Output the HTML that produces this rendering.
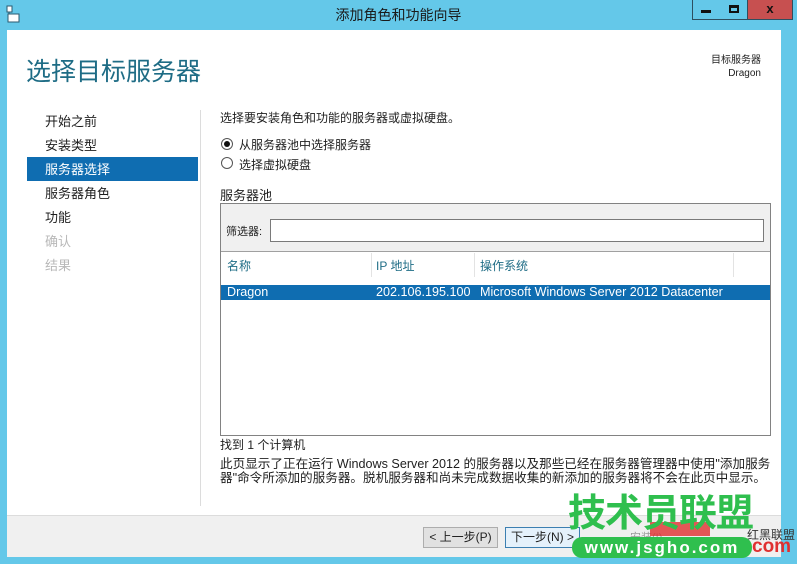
<!DOCTYPE html>
<html><head><meta charset="utf-8"><style>
*{margin:0;padding:0;box-sizing:border-box}
body{width:797px;height:564px;overflow:hidden;background:#64c8e9;font-family:"Liberation Sans","Noto Sans CJK SC",sans-serif;font-size:12px;color:#1e1e1e;position:relative}
.a{position:absolute;white-space:nowrap}
</style></head><body>
<div class="a" style="left:0;top:0;width:797px;height:29px;background:#64c8e9"></div>
<svg class="a" style="left:6px;top:5px" width="14" height="18" viewBox="0 0 14 18"><rect x="1" y="1" width="5" height="6" fill="#fff" stroke="#2a5a70"/><rect x="2" y="9" width="11" height="8" fill="#fff" stroke="#2a5a70"/><line x1="3" y1="7" x2="3" y2="9" stroke="#2a5a70"/></svg>
<div class="a" style="left:0;width:797px;top:5px;text-align:center;font-size:14px;color:#1a1a1a">添加角色和功能向导</div>
<div class="a" style="left:692px;top:0;width:29px;height:20px;border:1px solid #2d4f60;border-top:none;background:#64c8e9"></div>
<div class="a" style="left:701px;top:10px;width:10px;height:3px;background:#111"></div>
<div class="a" style="left:720px;top:0;width:28px;height:20px;border:1px solid #2d4f60;border-top:none;border-left:none;background:#64c8e9"></div>
<div class="a" style="left:729px;top:5px;width:10px;height:8px;border:2px solid #111;border-top-width:3px"></div>
<div class="a" style="left:748px;top:0;width:45px;height:20px;background:#c75050;border:1px solid #2d4f60;border-top:none;border-left:none;text-align:center;font-weight:bold;font-size:13px;color:#111;line-height:18px">x</div>
<div class="a" style="left:7px;top:30px;width:774px;height:486px;background:#fff"></div>
<div class="a" style="left:7px;top:515px;width:774px;height:42px;background:#f0f0f0;border-top:1px solid #dcdcdc"></div>
<div class="a" style="left:26px;top:52px;font-size:25px;color:#1e6c85">选择目标服务器</div>
<div class="a" style="right:36px;top:54px;font-size:10px;text-align:right;line-height:13px">目标服务器<br>Dragon</div>
<div class="a" style="left:27px;top:157px;width:171px;height:24px;background:#0f6db1"></div>
<div class="a" style="left:45px;top:110px;font-size:13px;line-height:24px">开始之前<br>安装类型<br><span style="color:#fff">服务器选择</span><br>服务器角色<br>功能<br><span style="color:#b8b8b8">确认</span><br><span style="color:#b8b8b8">结果</span></div>
<div class="a" style="left:200px;top:110px;width:1px;height:396px;background:#dcdcdc"></div>
<div class="a" style="left:220px;top:109px">选择要安装角色和功能的服务器或虚拟硬盘。</div>
<div class="a" style="left:221px;top:138px;width:12px;height:12px;border:1px solid #555;border-radius:50%"><div style="margin:2px;width:6px;height:6px;border-radius:50%;background:#111"></div></div>
<div class="a" style="left:239px;top:136px">从服务器池中选择服务器</div>
<div class="a" style="left:221px;top:157px;width:12px;height:12px;border:1px solid #555;border-radius:50%"></div>
<div class="a" style="left:239px;top:156px">选择虚拟硬盘</div>
<div class="a" style="left:220px;top:185px;font-size:13px">服务器池</div>
<div class="a" style="left:220px;top:203px;width:551px;height:233px;border:1px solid #828282;background:#fff"></div>
<div class="a" style="left:221px;top:204px;width:549px;height:48px;background:#f0f0f0;border-bottom:1px solid #a0a0a0"></div>
<div class="a" style="left:226px;top:223px;font-size:11px">筛选器:</div>
<div class="a" style="left:270px;top:219px;width:494px;height:23px;border:1px solid #7a7a7a;background:#fff"></div>
<div class="a" style="left:227px;top:257px;color:#1e6c85">名称</div>
<div class="a" style="left:376px;top:257px;color:#1e6c85">IP 地址</div>
<div class="a" style="left:480px;top:257px;color:#1e6c85">操作系统</div>
<div class="a" style="left:371px;top:253px;width:1px;height:24px;background:#e3e3e3"></div>
<div class="a" style="left:474px;top:253px;width:1px;height:24px;background:#e3e3e3"></div>
<div class="a" style="left:733px;top:253px;width:1px;height:24px;background:#e3e3e3"></div>
<div class="a" style="left:221px;top:285px;width:549px;height:15px;background:#0f6db1"></div>
<div class="a" style="left:227px;top:285px;color:#fff;line-height:15px;font-size:12.6px">Dragon</div>
<div class="a" style="left:376px;top:285px;color:#fff;line-height:15px;font-size:12.6px">202.106.195.100</div>
<div class="a" style="left:480px;top:285px;color:#fff;line-height:15px;font-size:12.6px">Microsoft Windows Server 2012 Datacenter</div>
<div class="a" style="left:220px;top:436px">找到 1 个计算机</div>
<div class="a" style="left:220px;top:457px;line-height:14px;font-size:12.6px">此页显示了正在运行 Windows Server 2012 的服务器以及那些已经在服务器管理器中使用"添加服务<br>器"命令所添加的服务器。脱机服务器和尚未完成数据收集的新添加的服务器将不会在此页中显示。</div>
<div class="a" style="left:423px;top:527px;width:75px;height:21px;border:1px solid #adadad;background:#e1e1e1;text-align:center;line-height:19px">&lt; 上一步(P)</div>
<div class="a" style="left:505px;top:527px;width:75px;height:21px;border:1px solid #3c7fb1;background:#e5f1fb;text-align:center;line-height:19px">下一步(N) &gt;</div>
<div class="a" style="left:630px;top:529px;color:#999;font-size:11px">安装(I)</div>
<div class="a" style="left:650px;top:522px;width:60px;height:14px;background:#e03030;opacity:.8"></div>
<div class="a" style="left:747px;top:526px;font-size:12px;color:#333">红黑联盟</div>
<div class="a" style="left:752px;top:536px;font-size:19px;font-weight:bold;color:#e03030">com</div>
<div class="a" style="left:568px;top:492px;font-size:38px;font-weight:bold;color:#2fbf4e;letter-spacing:-1px;line-height:44px">技术员联盟</div>
<div class="a" style="left:572px;top:537px;width:180px;height:21px;border-radius:10px;background:#2fbf4e;color:#fff;font-size:17px;font-weight:bold;text-align:center;line-height:21px;letter-spacing:2px">www.jsgho.com</div>
</body></html>
